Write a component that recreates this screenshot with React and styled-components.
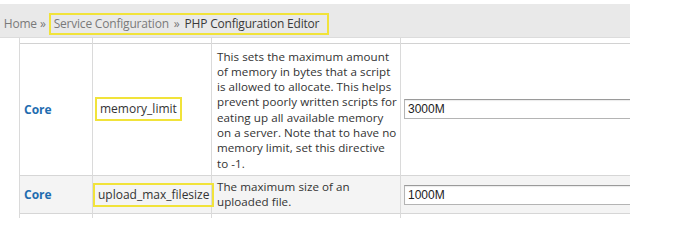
import React from 'react'
import { styled, createGlobalStyle } from 'styled-components'

const GlobalStyle = createGlobalStyle`
  html, body {
    margin: 0;
    padding: 0;
    background: #fff;
  }
  body {
    font-family: "Open Sans", "Liberation Sans", sans-serif;
  }
`

const Page = styled.div`
  width: 700px;
  height: 226px;
  overflow: hidden;
  background: #fff;
`

const Viewport = styled.div`
  width: 630px;
  height: 218px;
  padding-top: 4px;
  box-sizing: border-box;
  overflow: hidden;
`

const Breadcrumbs = styled.div`
  height: 34px;
  padding-top: 6px;
  background: #e9e9e9;
  border-bottom: 1px solid #dcdcdc;
  box-sizing: border-box;
  display: flex;
  align-items: center;
  font-size: 12px;
  letter-spacing: -0.2px;
  color: #7a7a7a;
  white-space: nowrap;
`

const Crumb = styled.span`
  color: ${({ current }) => (current ? '#3a3a3a' : '#7a7a7a')};
`

const Cut = styled.span`
  margin-left: -6px;
  margin-right: 4px;
`

const Sep = styled.span`
  margin: 0 ${({ wide }) => (wide ? '5px' : '3px')};
  color: #777;
`

const Marked = styled.span`
  display: inline-flex;
  align-items: center;
  height: 22px;
  box-sizing: border-box;
  border: 2px solid #f1e33a;
  padding: 0 8px 0 3px;
`

const Table = styled.table`
  margin-left: 19px;
  width: 720px;
  border-collapse: collapse;
  table-layout: fixed;
  font-size: 12px;
  color: #333;
`

const Row = styled.tr`
  background: ${({ striped }) => (striped ? '#f4f4f4' : '#fff')};
  border-bottom: 1px solid #d6d6d6;
`

const HeadRow = styled.tr`
  height: 5px;
  border-bottom: 1px solid #d2d2d2;
`

const Cell = styled.td`
  border-left: 1px solid #dadada;
  border-right: 1px solid #dadada;
  padding: ${({ pad }) => pad || '4px 5px'};
  vertical-align: middle;
  line-height: 15.3px;
  white-space: nowrap;
`

const Section = styled(Cell)`
  color: #1f6db0;
  font-weight: 700;
  padding-left: 4px;
`

const Info = styled(Cell)`
  font-size: 11.6px;
  letter-spacing: 0.05px;
`

const Directive = styled.span`
  display: inline-block;
  border: 2px solid #f1e33a;
  padding: 2px 3px;
  line-height: 16px;
  color: #333;
`

const Value = styled.input`
  width: 300px;
  height: 20px;
  box-sizing: border-box;
  border: 1px solid #b4b4b4;
  border-top-color: #9a9a9a;
  box-shadow: inset 0 1px 1px rgba(0, 0, 0, 0.08);
  padding: 0 3px;
  font-family: "Liberation Sans", Arial, sans-serif;
  font-size: 12px;
  color: #222;
  background: #fff;
  outline: none;
`

const settings = [
  {
    section: 'Core',
    name: 'memory_limit',
    info: [
      'This sets the maximum amount',
      'of memory in bytes that a script',
      'is allowed to allocate. This helps',
      'prevent poorly written scripts for',
      'eating up all available memory',
      'on a server. Note that to have no',
      'memory limit, set this directive',
      'to -1.',
    ],
    value: '3000M',
    pad: '5px 1px 4px 5px',
    namePad: '0 0 0 2px',
  },
  {
    section: 'Core',
    name: 'upload_max_filesize',
    info: ['The maximum size of an', 'uploaded file.'],
    value: '1000M',
    striped: true,
    pad: '3px 1px 4px 5px',
    namePad: '0',
  },
]

export default function App() {
  return (
    <>
      <GlobalStyle />
      <Page>
        <Viewport>
          <Breadcrumbs>
            <Cut>»</Cut>
            <Crumb>Home</Crumb>
            <Sep>»</Sep>
            <Marked>
              <Crumb>Service Configuration</Crumb>
              <Sep wide>»</Sep>
              <Crumb current>PHP Configuration Editor</Crumb>
            </Marked>
          </Breadcrumbs>
          <Table>
            <colgroup>
              <col style={{ width: 73 }} />
              <col style={{ width: 119 }} />
              <col style={{ width: 189 }} />
              <col />
            </colgroup>
            <tbody>
              <HeadRow>
                <Cell pad="0" />
                <Cell pad="0" />
                <Cell pad="0" />
                <Cell pad="0" />
              </HeadRow>
              {settings.map((s) => (
                <Row key={s.name} striped={s.striped}>
                  <Section pad={s.pad}>{s.section}</Section>
                  <Cell pad={s.namePad}>
                    <Directive>{s.name}</Directive>
                  </Cell>
                  <Info pad={s.pad}>
                    {s.info.map((line, i) => (
                      <React.Fragment key={i}>
                        {i > 0 && <br />}
                        {line}
                      </React.Fragment>
                    ))}
                  </Info>
                  <Cell pad="0 3px">
                    <Value defaultValue={s.value} />
                  </Cell>
                </Row>
              ))}
              <Row>
                <Cell pad="0" style={{ height: 20 }} />
                <Cell pad="0" />
                <Cell pad="0" />
                <Cell pad="0" />
              </Row>
            </tbody>
          </Table>
        </Viewport>
      </Page>
    </>
  )
}
